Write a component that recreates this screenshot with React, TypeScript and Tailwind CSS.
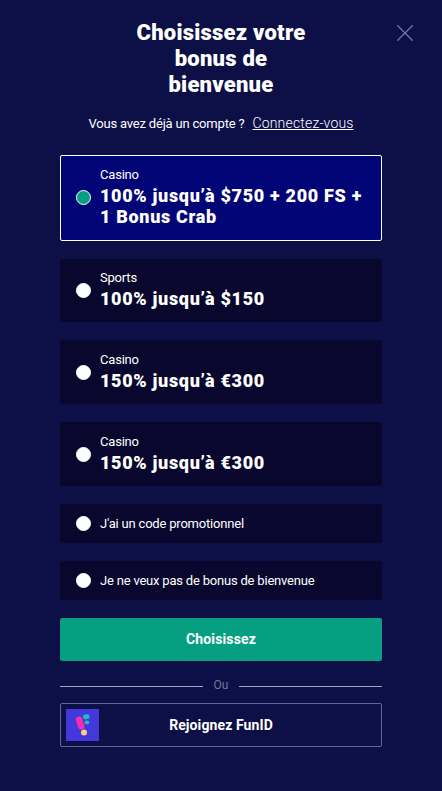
import { useState } from "react";

const bonuses = [
  { id: 1, category: "Casino", title: "100% jusqu’à $750 + 200 FS + 1 Bonus Crab", height: "h-[86px] pb-0.5" },
  { id: 2, category: "Sports", title: "100% jusqu’à $150", height: "h-[63px] pb-px" },
  { id: 3, category: "Casino", title: "150% jusqu’à €300", height: "h-16" },
  { id: 4, category: "Casino", title: "150% jusqu’à €300", height: "h-16" },
  { id: 5, title: "J'ai un code promotionnel", height: "h-[39px]" },
  { id: 6, title: "Je ne veux pas de bonus de bienvenue", height: "h-[39px]" },
];

const FunIdLogo = () => (
  <svg className="w-[33px] h-8 bg-[#4338dc]" viewBox="0 0 33 32">
    <rect x="11" y="7.5" width="6.4" height="13" rx="3.2" fill="#fb2cab" transform="rotate(-18 14.2 14)" />
    <rect x="17" y="5.5" width="6.6" height="4.8" rx="2.4" fill="#1cc0b6" transform="rotate(-8 20 8)" />
    <rect x="18.5" y="11.5" width="4.8" height="3.8" rx="1.9" fill="#1cc0b6" />
    <circle cx="18" cy="23.6" r="3" fill="#fbcf7c" />
  </svg>
);

const App = () => {
  const [selected, setSelected] = useState(1);

  return (
    <main className="relative w-full min-h-screen bg-[#0d1047] text-white font-['Roboto',sans-serif] px-[60px] pt-5">
      <button type="button" aria-label="Fermer" className="absolute top-[25px] right-[29px]">
        <svg className="w-4 h-4 stroke-[#74759a]" viewBox="0 0 16 16" fill="none" strokeWidth="1.3">
          <path d="M0.3 0.3L15.7 15.7M15.7 0.3L0.3 15.7" />
        </svg>
      </button>

      <h1 className="w-[190px] mx-auto text-center text-[22px] leading-[26px] font-black tracking-[0.24px]">
        Choisissez votre bonus de bienvenue
      </h1>

      <p className="flex items-center justify-center gap-2 mt-[15px] h-5 text-[13px] tracking-[-0.19px] whitespace-nowrap">
        <span className="pt-0.5">Vous avez déjà un compte ?</span>
        <a href="#" className="text-sm font-light tracking-[0.18px] underline">
          Connectez-vous
        </a>
      </p>

      <div className="flex flex-col gap-[18px] mt-[22px]">
        {bonuses.map((bonus) => (
          <button
            key={bonus.id}
            type="button"
            onClick={() => setSelected(bonus.id)}
            className={`flex items-center w-full rounded-xs border pl-[15px] pr-2 text-left ${bonus.height} ${
              selected === bonus.id ? "bg-[#020576] border-white" : "bg-[#09072d] border-[#09072d]"
            }`}
          >
            <span
              className={`w-[15px] h-[15px] shrink-0 rounded-full border border-white mr-[9px] ${
                selected === bonus.id ? "bg-[#079f82]" : "bg-white"
              }`}
            />
            {bonus.category ? (
              <span className="block -mt-1">
                <span className="block text-[13px] leading-[21px] tracking-[-0.2px]">{bonus.category}</span>
                <span className="block text-lg leading-[21px] font-black tracking-[0.68px]">{bonus.title}</span>
              </span>
            ) : (
              <span className="text-[13px] tracking-[-0.2px]">{bonus.title}</span>
            )}
          </button>
        ))}
      </div>

      <button type="button" className="block w-full h-[43px] mt-[18px] pb-0.5 rounded-xs bg-[#079f82] text-sm font-bold tracking-[0.15px]">
        Choisissez
      </button>

      <div className="flex items-center h-[18px] mt-4 text-xs text-[#74759a]">
        <span className="flex-1 h-px mt-px bg-[#a1a2bd]" />
        <span className="w-9 pb-0.5 text-center">Ou</span>
        <span className="flex-1 h-px mt-px bg-[#a1a2bd]" />
      </div>

      <button
        type="button"
        className="flex items-center w-full h-11 mt-2 rounded-xs border border-[#65668d] pl-[5px] text-sm font-bold tracking-[0.1px]"
      >
        <FunIdLogo />
        <span className="flex-1 pr-[38px] text-center">Rejoignez FunID</span>
      </button>
    </main>
  );
};

export default App;
